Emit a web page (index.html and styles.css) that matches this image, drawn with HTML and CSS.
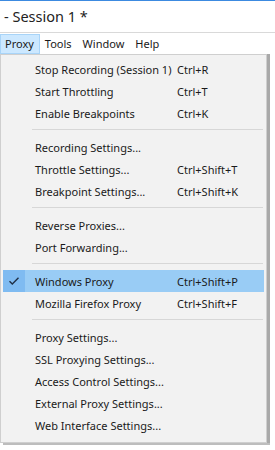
FILE: index.html
```html
<!DOCTYPE html>
<html>
<head>
<meta charset="utf-8">
<link rel="stylesheet" href="styles.css">
</head>
<body>
<div class="window">
  <div class="topline"></div>
  <div class="title">- Session 1 *</div>
  <div class="menubar">
    <span class="mb-item active">Proxy</span>
    <span class="mb-item">Tools</span>
    <span class="mb-item">Window</span>
    <span class="mb-item">Help</span>
  </div>
  <div class="menu">
    <div class="row"><span class="chk"></span><span class="lbl">Stop Recording (Session 1)</span><span class="key">Ctrl+R</span></div>
    <div class="row"><span class="chk"></span><span class="lbl">Start Throttling</span><span class="key">Ctrl+T</span></div>
    <div class="row"><span class="chk"></span><span class="lbl">Enable Breakpoints</span><span class="key">Ctrl+K</span></div>
    <div class="sep"></div>
    <div class="row"><span class="chk"></span><span class="lbl">Recording Settings...</span><span class="key"></span></div>
    <div class="row"><span class="chk"></span><span class="lbl">Throttle Settings...</span><span class="key">Ctrl+Shift+T</span></div>
    <div class="row"><span class="chk"></span><span class="lbl">Breakpoint Settings...</span><span class="key">Ctrl+Shift+K</span></div>
    <div class="sep"></div>
    <div class="row"><span class="chk"></span><span class="lbl">Reverse Proxies...</span><span class="key"></span></div>
    <div class="row"><span class="chk"></span><span class="lbl">Port Forwarding...</span><span class="key"></span></div>
    <div class="sep"></div>
    <div class="row hl"><span class="chk on"><svg width="12" height="10" viewBox="0 0 12 10"><path d="M1.5 5.2 L4.3 8 L10.5 1.8" fill="none" stroke="#1f2f44" stroke-width="1.4"/></svg></span><span class="lbl">Windows Proxy</span><span class="key">Ctrl+Shift+P</span></div>
    <div class="row"><span class="chk"></span><span class="lbl">Mozilla Firefox Proxy</span><span class="key">Ctrl+Shift+F</span></div>
    <div class="sep"></div>
    <div class="row"><span class="chk"></span><span class="lbl">Proxy Settings...</span><span class="key"></span></div>
    <div class="row"><span class="chk"></span><span class="lbl">SSL Proxying Settings...</span><span class="key"></span></div>
    <div class="row"><span class="chk"></span><span class="lbl">Access Control Settings...</span><span class="key"></span></div>
    <div class="row"><span class="chk"></span><span class="lbl">External Proxy Settings...</span><span class="key"></span></div>
    <div class="row"><span class="chk"></span><span class="lbl">Web Interface Settings...</span><span class="key"></span></div>
  </div>
</div>
</body>
</html>
```
FILE: styles.css
```css
html, body {
  margin: 0;
  padding: 0;
  background: #ffffff;
}
body {
  width: 275px;
  height: 450px;
  overflow: hidden;
  font-family: "Noto Sans", "Open Sans", sans-serif;
  color: #1a1a1a;
}
.topline {
  height: 1px;
  background: #3c8ae0;
}
.title {
  height: 32px;
  line-height: 31px;
  padding-left: 4px;
  font-size: 14.5px;
  color: #222;
  border-bottom: 1px solid #d9d9d9;
  box-sizing: border-box;
}
.menubar {
  display: flex;
  height: 20px;
  align-items: stretch;
  font-size: 11px;
  background: #fff;
  padding-top: 1px;
}
.mb-item {
  padding: 0 5px 0 4px;
  line-height: 18px;
  border: 1px solid transparent;
}
.mb-item.active {
  background: #cce8ff;
  border-color: #a8d4f8;
}
.menu {
  width: 261px;
  background: #f2f2f2;
  border: 1px solid #cfcfcf;
  padding: 3px 2px 6px 2px;
  box-shadow: 3px 0 0 #a9a9a9, 3px 2px 0 #bdbdbd;
  font-size: 11px;
}
.row {
  display: grid;
  grid-template-columns: 32px 1fr 87px;
  height: 22px;
  align-items: center;
}
.row.hl {
  background: #99ccf5;
}
.chk {
  height: 22px;
  display: flex;
  align-items: center;
  justify-content: center;
}
.chk.on {
  background: #7fbbf1;
  width: 22px;
}
.lbl {
  white-space: nowrap;
  min-width: 0;
}
.key {
  white-space: nowrap;
}
.sep {
  height: 1px;
  background: #d7d7d7;
  margin: 5px 1px 6px 29px;
}
```
